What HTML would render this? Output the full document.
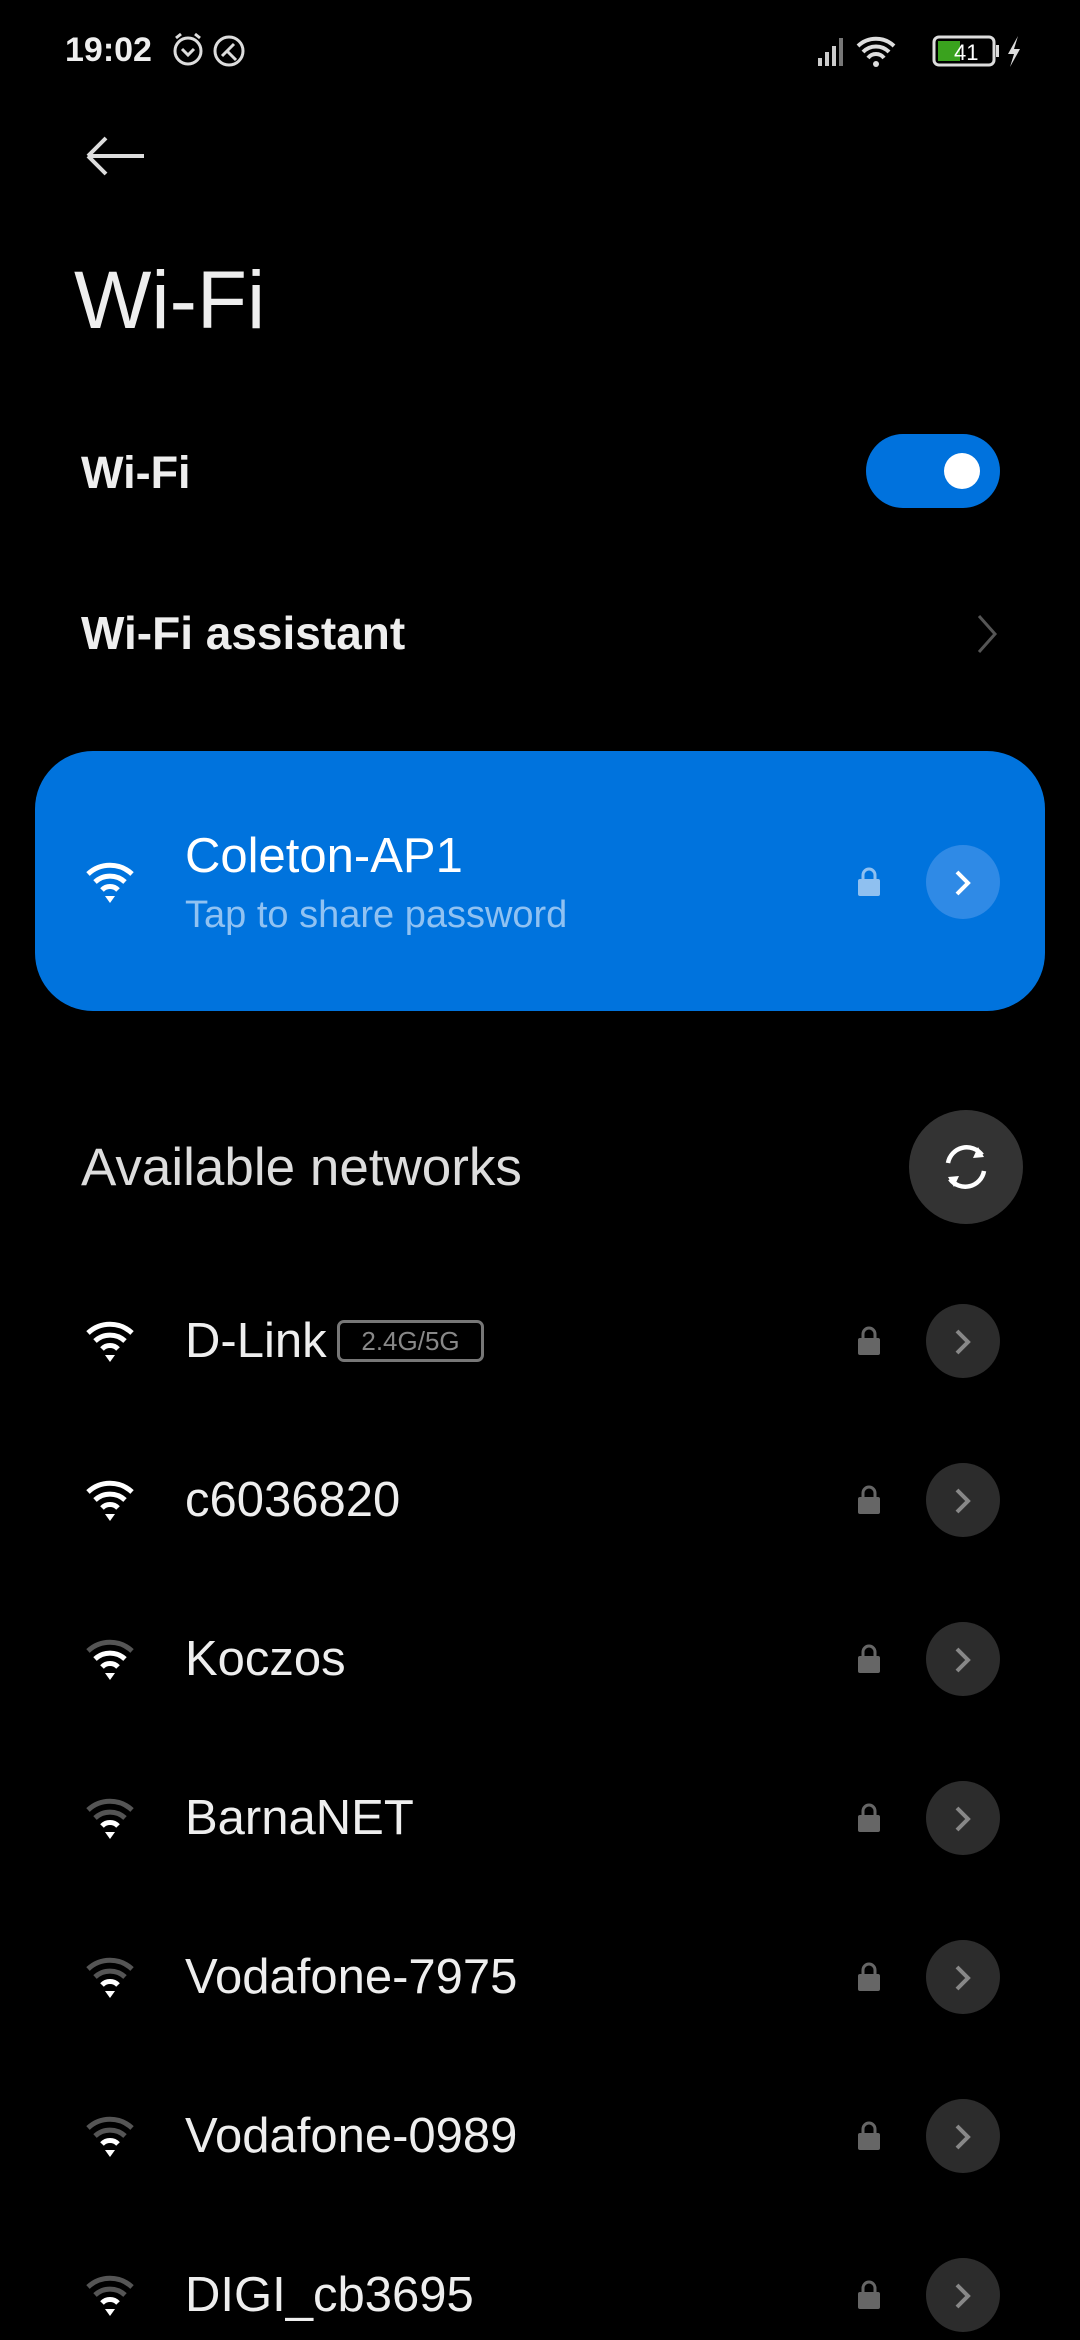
<!DOCTYPE html>
<html><head><meta charset="utf-8"><style>
*{margin:0;padding:0;box-sizing:border-box}
body{width:1080px;height:2340px;background:#000;color:#fff;font-family:"Liberation Sans",sans-serif;position:relative;overflow:hidden}
.a{position:absolute}
.row .name{position:absolute;left:185px;font-size:49px;color:#eee;transform:translateY(-50%)}
.lock{position:absolute;left:856px;width:26px;height:30px}
.btn{position:absolute;left:926px;width:74px;height:74px;border-radius:50%;background:#2c2c2c}
.wf{position:absolute;left:84px;width:52px;height:44px}
</style></head><body>
<div class="a" style="left:65px;top:31px;font-size:34px;font-weight:bold;color:#eee">19:02</div>
<svg class="a" style="left:170px;top:32px" width="80" height="36" viewBox="0 0 80 36" fill="none" stroke="#ddd" stroke-width="3"><circle cx="18" cy="19" r="13"/><path d="M12 17l6 6 6-6M6 6l5-4M30 6l-5-4"/><circle cx="59" cy="19" r="14"/><path d="M52 24l12-12M58 20l8 8"/></svg>
<svg class="a" style="left:818px;top:34px" width="210" height="34" viewBox="0 0 210 34"><g fill="#ccc"><rect x="0" y="24" width="4" height="8"/><rect x="7" y="18" width="4" height="14"/><rect x="14" y="12" width="4" height="20"/><rect x="21" y="4" width="4" height="28" fill="#777"/></g><path d="M40 12a26 26 0 0 1 36 0M45 18a18 18 0 0 1 26 0M50 24a10 10 0 0 1 16 0" stroke="#ddd" stroke-width="4" fill="none"/><circle cx="58" cy="30" r="3" fill="#ddd"/><rect x="116" y="3" width="60" height="28" rx="5" stroke="#ddd" stroke-width="3" fill="none"/><rect x="120" y="7" width="22" height="20" fill="#3aa21e"/><text x="136" y="26" font-size="22" fill="#fff" font-family="Liberation Sans">41</text><rect x="178" y="11" width="3" height="12" fill="#ddd"/><path d="M200 2l-10 18h6l-4 13 10-18h-6z" fill="#ddd"/></svg>
<svg class="a" style="left:84px;top:134px" width="64" height="44"><path d="M4 22h56M4 22l18-18M4 22l18 18" stroke="#ddd" stroke-width="4" fill="none"/></svg>
<div class="a" style="left:74px;top:254px;font-size:82px;font-weight:300;color:#eee">Wi-Fi</div>
<div class="a" style="left:81px;top:447px;font-size:45px;font-weight:bold;color:#eee">Wi-Fi</div>
<div class="a" style="left:866px;top:434px;width:134px;height:74px;border-radius:37px;background:#0072dd"><div class="a" style="left:78px;top:19px;width:36px;height:36px;border-radius:50%;background:#fff"></div></div>
<div class="a" style="left:81px;top:606px;font-size:46px;font-weight:bold;color:#eee">Wi-Fi assistant</div>
<svg class="a" style="left:975px;top:612px" width="24" height="44"><path d="M4 4l16 18-16 18" stroke="#555" stroke-width="3" fill="none"/></svg>
<div class="a" style="left:35px;top:751px;width:1010px;height:260px;border-radius:58px;background:#0073dd"></div>
<svg class="wf" style="top:860px" viewBox="0 0 52 44"><path d="M4 14a32 32 0 0 1 44 0M11 22a22 22 0 0 1 30 0M18 30a11 11 0 0 1 16 0" stroke="#fff" stroke-width="5" fill="none"/><path d="M21 36h10l-5 7z" fill="#fff"/></svg>
<div class="a" style="left:185px;top:828px;font-size:49px;color:#fff">Coleton-AP1</div>
<div class="a" style="left:185px;top:894px;font-size:38px;color:#90c2f2">Tap to share password</div>
<svg class="lock" style="top:867px" viewBox="0 0 26 30"><path d="M7 13V8a6 6 0 0 1 12 0v5" stroke="#8fc0f0" stroke-width="3" fill="none"/><rect x="2" y="12" width="22" height="17" rx="2" fill="#8fc0f0"/></svg>
<div class="btn" style="top:845px;background:#2f8ae6"></div>
<svg class="a" style="left:952px;top:868px" width="22" height="30"><path d="M5 4l11 11-11 11" stroke="#fff" stroke-width="4" fill="none"/></svg>
<div class="a" style="left:81px;top:1137px;font-size:53px;color:#ddd">Available networks</div>
<div class="a" style="left:909px;top:1110px;width:114px;height:114px;border-radius:50%;background:#333"></div>
<svg class="a" style="left:938px;top:1139px" width="56" height="56" viewBox="0 0 56 56"><path d="M10 24a19 19 0 0 1 34-8M46 32a19 19 0 0 1-34 8" stroke="#fff" stroke-width="4.5" fill="none"/><path d="M40 8l6 10-11 1z M16 48l-6-10 11-1z" fill="#fff"/></svg>
<div id="rows"></div>
<script>
const rows=[["D-Link",1341,3],["c6036820",1500,3],["Koczos",1659,2],["BarnaNET",1818,1],["Vodafone-7975",1977,1],["Vodafone-0989",2136,1],["DIGI_cb3695",2295,1]];
let h="";
for(const [n,y,s] of rows){
 h+=`<svg class="wf" style="top:${y-22}px" viewBox="0 0 52 44"><path d="M4 14a32 32 0 0 1 44 0" stroke="${s>=3?'#fff':'#555'}" stroke-width="5" fill="none"/><path d="M11 22a22 22 0 0 1 30 0" stroke="${s>=2?'#fff':'#555'}" stroke-width="5" fill="none"/><path d="M18 30a11 11 0 0 1 16 0" stroke="#fff" stroke-width="5" fill="none"/><path d="M21 36h10l-5 7z" fill="#fff"/></svg>`;
 h+=`<div class="row"><div class="name" style="top:${y}px">${n}</div></div>`;
 if(n=="D-Link")h+=`<div class="a" style="left:337px;top:${y-21}px;width:147px;height:42px;border:3px solid #777;border-radius:7px;color:#888;font-size:26px;text-align:center;line-height:36px">2.4G/5G</div>`;
 h+=`<svg class="lock" style="top:${y-15}px" viewBox="0 0 26 30"><path d="M7 13V8a6 6 0 0 1 12 0v5" stroke="#666" stroke-width="3" fill="none"/><rect x="2" y="12" width="22" height="17" rx="2" fill="#666"/></svg>`;
 h+=`<div class="btn" style="top:${y-37}px"></div><svg class="a" style="left:952px;top:${y-14}px" width="22" height="30"><path d="M5 4l11 11-11 11" stroke="#888" stroke-width="4" fill="none"/></svg>`;
}
document.getElementById("rows").innerHTML=h;
</script>
</body></html>
